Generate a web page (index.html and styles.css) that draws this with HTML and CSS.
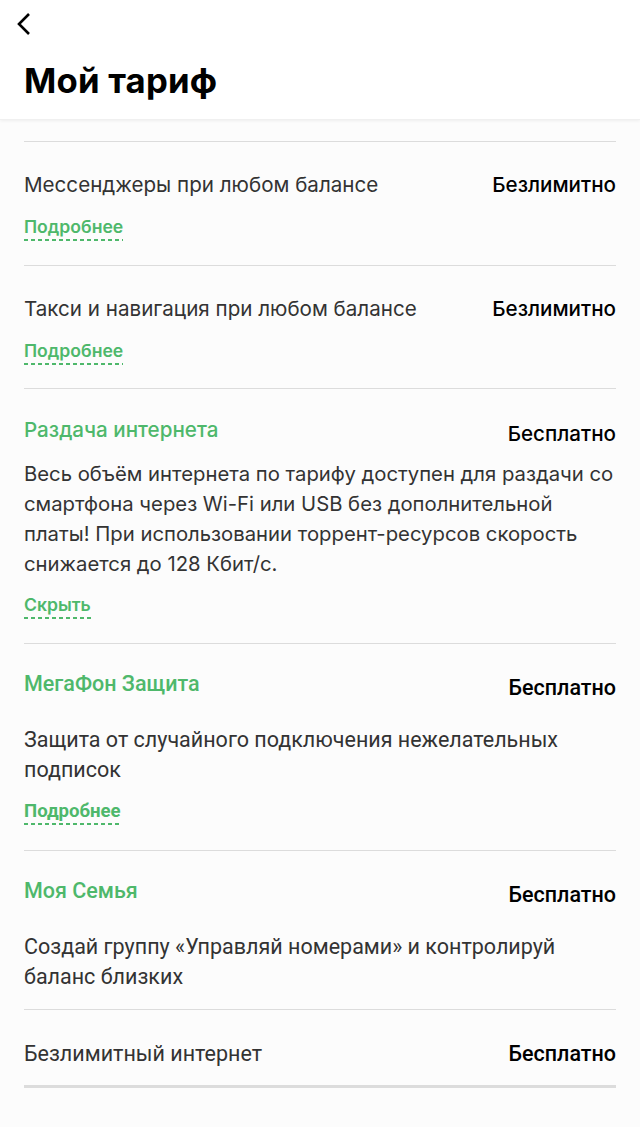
FILE: index.html
```html
<!DOCTYPE html>
<html lang="ru">
<head>
<meta charset="utf-8">
<title>Мой тариф</title>
<link rel="stylesheet" href="styles.css">
</head>
<body>
<header class="header">
  <button class="back" aria-label="Назад">
    <svg width="16" height="24" viewBox="0 0 16 24"><path d="M13 2 L3 12 L13 22" fill="none" stroke="#000" stroke-width="2.6"/></svg>
  </button>
  <h1 class="title">Мой тариф</h1>
</header>
<main class="list">
  <section class="item g">
    <div class="row"><span class="name">Мессенджеры при любом балансе</span><span class="value">Безлимитно</span></div>
    <a class="more">Подробнее</a>
  </section>
  <section class="item g second">
    <div class="row"><span class="name">Такси и навигация при любом балансе</span><span class="value">Безлимитно</span></div>
    <a class="more">Подробнее</a>
  </section>
  <section class="item g open">
    <div class="row"><span class="name green">Раздача интернета</span><span class="value low">Бесплатно</span></div>
    <p class="desc">Весь объём интернета по тарифу доступен для раздачи со смартфона через Wi-Fi или USB без дополнительной платы! При использовании торрент-ресурсов скорость снижается до 128 Кбит/с.</p>
    <a class="more">Скрыть</a>
  </section>
  <section class="item r open">
    <div class="row"><span class="name green">МегаФон Защита</span><span class="value low">Бесплатно</span></div>
    <p class="desc">Защита от случайного подключения нежелательных подписок</p>
    <a class="more">Подробнее</a>
  </section>
  <section class="item r open nolink">
    <div class="row"><span class="name green">Моя Семья</span><span class="value low">Бесплатно</span></div>
    <p class="desc">Создай группу «Управляй номерами» и контролируй баланс близких</p>
  </section>
  <section class="item r last">
    <div class="row"><span class="name">Безлимитный интернет</span><span class="value">Бесплатно</span></div>
  </section>
</main>
</body>
</html>
```
FILE: styles.css
```css
* { box-sizing: border-box; }
html, body { margin: 0; padding: 0; }
body {
  background: #fcfcfc;
  font-family: Inter, "Noto Sans", sans-serif;
  color: #333;
  width: 640px;
}
.header {
  background: #fff;
  height: 120px;
  padding: 12px 24px 0 24px;
  box-shadow: 0 1px 3px rgba(0,0,0,0.06);
  border-bottom: 1px solid #f0f0f0;
}
.back {
  display: block;
  background: none;
  border: 0;
  padding: 0;
  margin-left: -8px;
  width: 16px;
  height: 24px;
  cursor: pointer;
}
.back svg { display: block; }
.title {
  margin: 22px 0 0 0;
  font-size: 34.7px;
  line-height: 44px;
  font-weight: 700;
  color: #000;
  letter-spacing: 0.2px;
}
.list {
  padding: 21px 24px 0 24px;
}
.item {
  border-top: 1px solid #dcdcdc;
  padding: 30px 0 24px 0;
}
.item.second { padding-bottom: 23px; }
.item.g.open { padding-top: 28px; padding-bottom: 24px; }
.item.r.open { padding-top: 27px; padding-bottom: 25px; }
.item.r.open.nolink { padding-bottom: 17px; }
.item.last {
  border-bottom: 3px solid #dcdcdc;
  padding-top: 31px;
  padding-bottom: 18px;
}
.row {
  display: flex;
  justify-content: space-between;
  align-items: flex-start;
  gap: 16px;
}
.name {
  font-size: 20.6px;
  line-height: 26px;
  color: #333;
}
.green { color: #4eb86b; font-weight: 500; }
.value {
  font-size: 20.6px;
  line-height: 26px;
  font-weight: 500;
  color: #000;
  white-space: nowrap;
}
.value.low { margin-top: 4px; }
.more {
  display: inline-block;
  margin-top: 19px;
  font-size: 17.6px;
  line-height: 20px;
  font-weight: 600;
  color: #4eb86b;
  padding-bottom: 4px;
  background-image: linear-gradient(to right, #4eb86b 0 4px, transparent 4px 7px);
  background-size: 7px 2px;
  background-repeat: repeat-x;
  background-position: left bottom;
}
.desc {
  margin: 12px 0 0 0;
  font-size: 20.3px;
  line-height: 30px;
  color: #333;
}
.item.open .more { margin-top: 16px; }
.r .name, .r .value, .r .desc {
  font-family: Roboto, "Noto Sans", sans-serif;
  font-size: 21.5px;
}
.r .more { font-family: Roboto, "Noto Sans", sans-serif; font-weight: 700; font-size: 18.6px; }
.r .desc { margin-top: 24px; }
.r .value { font-weight: 500; }
```
